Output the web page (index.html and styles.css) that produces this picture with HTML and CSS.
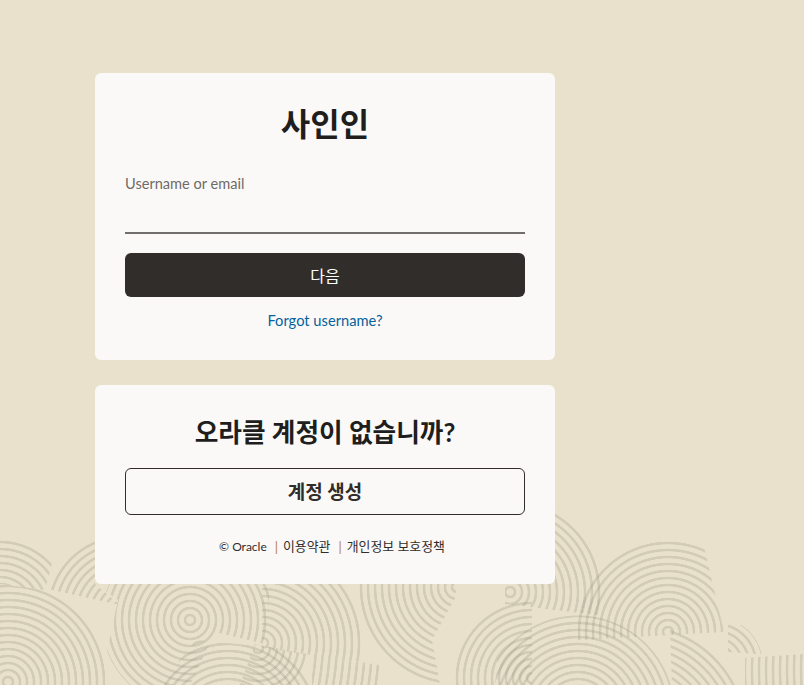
FILE: index.html
```html
<!DOCTYPE html>
<html lang="ko">
<head>
    <meta charset="UTF-8">
    <meta name="viewport" content="width=device-width, initial-scale=1.0">
    <title>사인인</title>
    <link rel="stylesheet" href="styles.css">
</head>
<body>
    <!-- wood grain backdrop, each patch is one set of rings -->
    <div class="backdrop" aria-hidden="true">
        <div class="rings ring-left"></div>
        <div class="rings ring-top-far"></div>
        <div class="rings ring-top-left"></div>
        <div class="rings ring-print"></div>
        <div class="rings ring-bottom"></div>
        <div class="rings ring-under-card"></div>
        <div class="rings ring-small"></div>
        <div class="rings ring-hatch"></div>
        <div class="rings ring-middle"></div>
        <div class="rings ring-fan"></div>
        <div class="rings ring-right-a"></div>
        <div class="rings ring-right-b"></div>
        <div class="rings ring-big"></div>
        <div class="rings ring-far"></div>
        <div class="rings ring-tip"></div>
        <div class="rings ring-corner"></div>
    </div>

    <main class="page">
        <section class="card card-signin">
            <h1 class="title">사인인</h1>
            <div class="field">
                <label class="field-label" for="username">Username or email</label>
                <input class="field-input" type="text" id="username">
            </div>
            <button class="btn btn-primary">다음</button>
            <a class="forgot-link" href="#">Forgot username?</a>
        </section>

        <section class="card card-create">
            <h2 class="subtitle">오라클 계정이 없습니까?</h2>
            <button class="btn btn-outline">계정 생성</button>
            <footer class="legal">
                <span class="legal-item legal-en">© Oracle</span>
                <span class="legal-sep">|</span>
                <a class="legal-item legal-ko" href="#">이용약관</a>
                <span class="legal-sep">|</span>
                <a class="legal-item legal-ko" href="#">개인정보 보호정책</a>
            </footer>
        </section>
    </main>
</body>
</html>
```
FILE: styles.css
```css
* {
    margin: 0;
    padding: 0;
    box-sizing: border-box;
    font-family: "Lato", "Noto Sans CJK KR", sans-serif;
}

html,
body {
    height: 100%;
    overflow: hidden;
}

body {
    position: relative;
    background: #e9e1cb;
    color: #312d2a;
}

.backdrop {
    position: absolute;
    inset: 0;
    overflow: hidden;
    filter: blur(0.5px);
}

.rings {
    --ring: rgba(150, 146, 130, 0.27);
    position: absolute;
    inset: 0;
    background: repeating-radial-gradient(circle at var(--x) var(--y),
        transparent 0 3.4px,
        var(--ring) 4px 6px,
        transparent 6.6px 7px);
    -webkit-mask-image: radial-gradient(circle at var(--x) var(--y), #000 var(--r), transparent calc(var(--r) + 1px));
    mask-image: radial-gradient(circle at var(--x) var(--y), #000 var(--r), transparent calc(var(--r) + 1px));
}

.ring-left {
    --x: 8px; --y: 682px; --r: 97px;
    clip-path: polygon(0 584px, 118px 600px, 108px 685px, 0 685px);
}

.ring-top-far {
    --x: 0px; --y: 610px; --r: 70px;
    clip-path: polygon(0 540px, 58px 540px, 45px 590px, 0 584px);
}

.ring-top-left {
    --x: 124px; --y: 612px; --r: 78px;
    clip-path: polygon(25px 535px, 95px 535px, 95px 584px, 120px 605px, 25px 584px);
}

.ring-print {
    --x: 190px; --y: 620px; --r: 88px;
    clip-path: polygon(118px 600px, 95px 584px, 270px 584px, 265px 644px, 215px 632px, 190px 685px, 100px 685px);
}

.ring-bottom {
    --x: 228px; --y: 726px; --r: 92px;
    clip-path: polygon(160px 685px, 196px 640px, 300px 650px, 320px 685px);
}

.ring-under-card {
    --x: 263px; --y: 643px; --r: 98px;
    clip-path: polygon(262px 584px, 362px 584px, 362px 662px, 262px 648px);
}

.ring-small {
    --x: 258px; --y: 648px; --r: 50px;
    clip-path: polygon(255px 644px, 312px 655px, 310px 685px, 240px 685px);
}

.ring-hatch {
    --x: 80px; --y: 640px; --r: 300px;
    clip-path: polygon(312px 655px, 400px 668px, 400px 685px, 312px 685px);
}

.ring-middle {
    --x: 457px; --y: 587px; --r: 100px;
    clip-path: polygon(358px 584px, 457px 584px, 455px 598px, 432px 640px, 440px 685px, 358px 685px);
}

.ring-fan {
    --x: 532px; --y: 678px; --r: 78px;
    clip-path: polygon(532px 600px, 532px 685px, 412px 685px, 440px 640px, 480px 600px);
}

.ring-right-a {
    --x: 510px; --y: 592px; --r: 94px;
    clip-path: polygon(555px 510px, 620px 510px, 620px 618px, 505px 604px, 505px 584px, 555px 584px);
}

.ring-right-b {
    --x: 668px; --y: 632px; --r: 92px;
    clip-path: polygon(578px 640px, 578px 530px, 700px 530px, 724px 632px);
}

.ring-big {
    --x: 578px; --y: 712px; --r: 96px;
    clip-path: polygon(495px 685px, 500px 630px, 540px 610px, 640px 610px, 672px 685px);
}

.ring-far {
    --x: 636px; --y: 736px; --r: 112px;
    clip-path: polygon(670px 630px, 704px 630px, 750px 685px, 672px 685px);
}

.ring-tip {
    --x: 716px; --y: 664px; --r: 46px;
    clip-path: polygon(728px 625px, 765px 625px, 775px 655px, 728px 652px);
}

.ring-corner {
    --x: 1100px; --y: 670px; --r: 400px;
    clip-path: polygon(745px 658px, 804px 654px, 804px 685px, 745px 685px);
}

.page {
    position: relative;
    width: 460px;
    margin-left: 95px;
    padding-top: 73px;
    display: flex;
    flex-direction: column;
    gap: 25px;
}

.card {
    background: #fbf9f8;
    border-radius: 6px;
    padding: 0 30px;
    display: flex;
    flex-direction: column;
}

.card-signin {
    height: 287px;
    padding-top: 27px;
}

.card-create {
    height: 199px;
    padding-top: 29px;
}

.title {
    font-size: 32px;
    line-height: 48px;
    font-weight: 700;
    text-align: center;
    color: #201e1c;
}

.subtitle {
    font-size: 25.7px;
    line-height: 36px;
    font-weight: 700;
    text-align: center;
    color: #201e1c;
}

.field {
    margin-top: 26px;
    display: flex;
    flex-direction: column;
}

.field-label {
    font-size: 14.6px;
    line-height: 20px;
    color: #6f6b66;
}

.field-input {
    height: 40px;
    border: none;
    border-bottom: 2px solid #716d6a;
    background: transparent;
    outline: none;
    font-size: 16px;
}

.btn {
    width: 100%;
    border-radius: 6px;
    font-size: 16px;
    cursor: pointer;
}

.btn-primary {
    height: 44px;
    margin-top: 19px;
    border: none;
    background: #312d2a;
    color: #ffffff;
}

.btn-outline {
    height: 47px;
    margin-top: 18px;
    padding-bottom: 3px;
    border: 1px solid #312d2a;
    background: transparent;
    color: #312d2a;
    font-size: 19px;
    font-weight: 700;
}

.forgot-link {
    margin-top: 13px;
    font-size: 14.7px;
    line-height: 20px;
    text-align: center;
    text-decoration: none;
    color: #04639c;
}

.legal {
    margin-top: 23px;
    padding-left: 14px;
    display: flex;
    justify-content: center;
    align-items: center;
    line-height: 18px;
}

.legal-item {
    color: #312d2a;
    text-decoration: none;
}

.legal-en {
    font-size: 12px;
}

.legal-ko {
    position: relative;
    top: -1px;
    font-size: 12.9px;
}

.legal-sep {
    margin: 0 5px 0 8px;
    font-size: 13px;
    color: #b8793a;
}
```
